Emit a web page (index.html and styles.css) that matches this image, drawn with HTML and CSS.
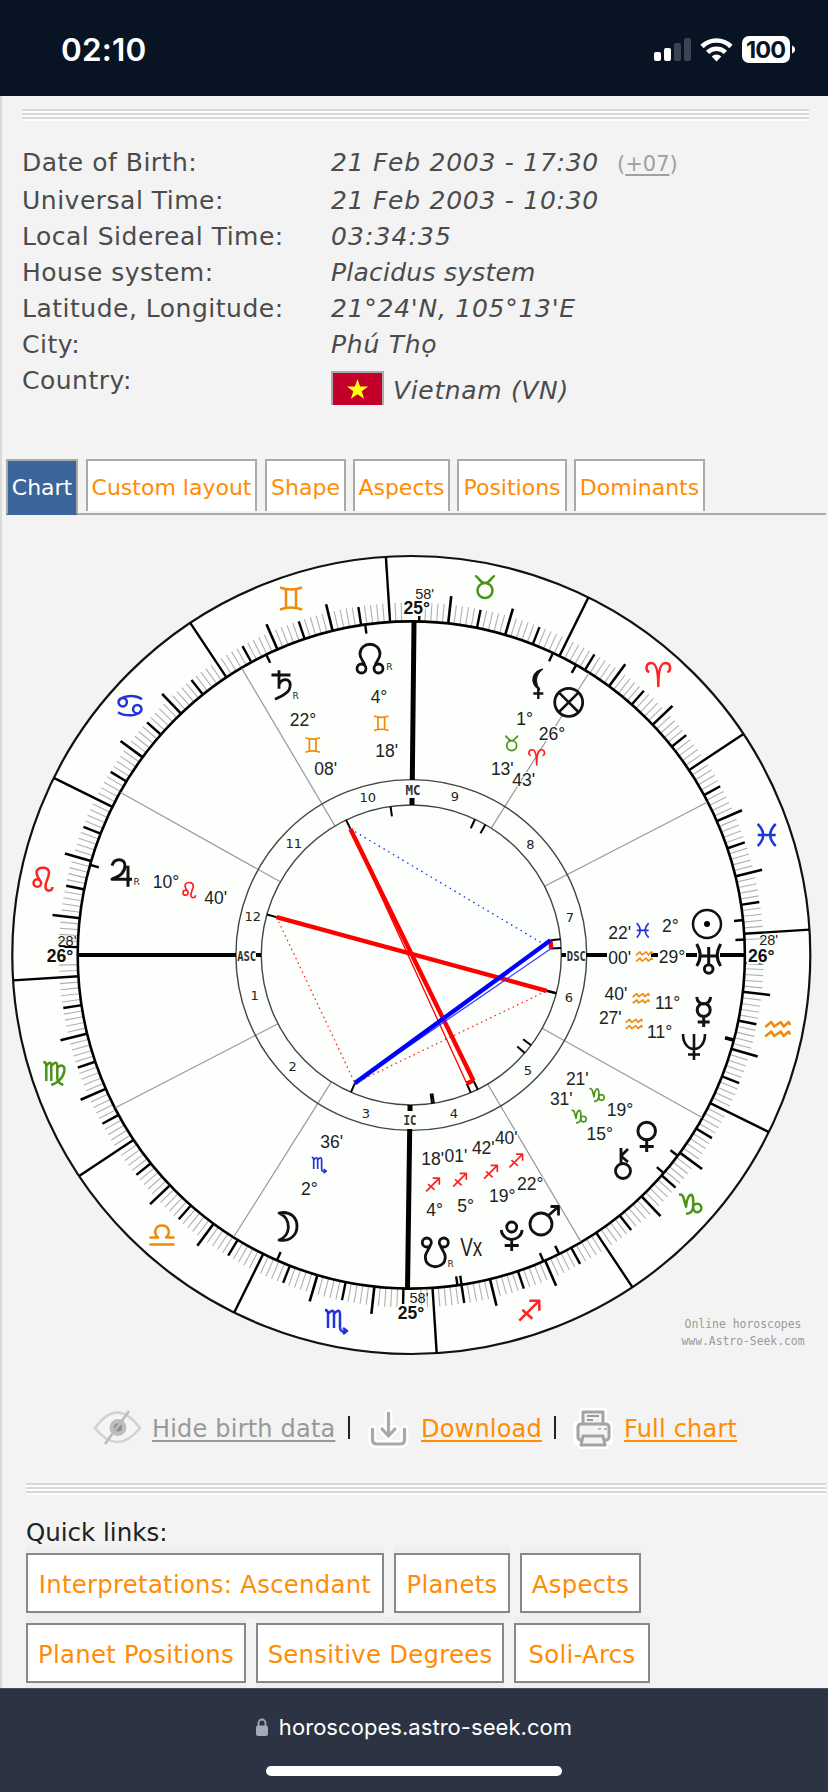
FILE: index.html
```html
<!DOCTYPE html>
<html lang="en">
<head>
<meta charset="utf-8">
<title>Astro-Seek birth chart</title>
<link rel="stylesheet" href="styles.css">
</head>
<body>
<header class="status">
  <span class="clock">02:10</span>
  <svg class="status-icons" width="144" height="30" viewBox="652 35 144 30">
    <g fill="#fff"><rect x="653" y="52" width="7" height="9" rx="2"/><rect x="663" y="48" width="7" height="13" rx="2"/></g>
    <g fill="#3a4352"><rect x="673" y="43" width="7" height="18" rx="2"/><rect x="683" y="38" width="7" height="23" rx="2"/></g>
    <g fill="none" stroke="#fff" stroke-width="4.6"><path d="M701 46.5a20.5 20.5 0 0 1 29 0"/><path d="M706.6 52.3a12.8 12.8 0 0 1 17.8 0"/></g>
    <path fill="#fff" d="M715.5 61.5l-4.8-5a7 7 0 0 1 9.6 0z"/>
    <rect x="741" y="36" width="48" height="27" rx="7" fill="#fff"/>
    <path fill="#fff" d="M791 45.500q3 1.200 3 4t-3 4z"/>
    <text class="battery" x="765" y="58" text-anchor="middle" textLength="40">100</text>
  </svg>
</header>
<main class="page">
  <div class="rule rule-top"></div>
  <dl class="details">
    <div class="row first"><dt>Date of Birth:</dt><dd class="num">21 Feb 2003 - 17:30<span class="zone">(<u>+07</u>)</span></dd></div>
    <div class="row"><dt>Universal Time:</dt><dd class="num">21 Feb 2003 - 10:30</dd></div>
    <div class="row"><dt>Local Sidereal Time:</dt><dd class="num wide">03:34:35</dd></div>
    <div class="row"><dt>House system:</dt><dd>Placidus system</dd></div>
    <div class="row"><dt>Latitude, Longitude:</dt><dd class="num">21°24'N, 105°13'E</dd></div>
    <div class="row"><dt>City:</dt><dd class="num">Phú Thọ</dd></div>
    <div class="row country"><dt>Country:</dt><dd><svg class="flag" width="53" height="34" viewBox="0 0 53 34"><path fill="#aaa" d="M0 0h53v34H0z"/><path fill="#c3002b" d="M2 2h49v32H2z"/><path fill="#ff1" d="M26.500 8l2.600 7.500h8l-6.400 4.700 2.400 7.600-6.600-4.600-6.600 4.600 2.400-7.600-6.400-4.700h8z"/></svg><span>Vietnam (VN)</span></dd></div>
  </dl>
  <nav class="tabs">
    <a class="tab active t1">Chart</a><a class="tab t2">Custom layout</a><a class="tab t3">Shape</a><a class="tab t4">Aspects</a><a class="tab t5">Positions</a><a class="tab t6">Dominants</a>
  </nav>
  <svg class="chart" id="chart" width="828" height="830" viewBox="0 540 828 830"></svg>
  <div class="actions">
    <svg class="eye" width="50" height="40" viewBox="93 1410 50 40"><path d="M95 1430q22-31 45 0q-23 28-45 0z" fill="#f5f5f5" stroke="#d2d2d2" stroke-width="2.500"/><circle cx="118" cy="1429.500" r="8.500" fill="#bdbdbd"/><circle cx="118" cy="1429.500" r="4" fill="#8d8d8d"/><path d="M129 1413l-24 33" stroke="#bbb" stroke-width="2.500"/></svg>
    <a class="hide">Hide birth data</a><i class="bar"></i>
    <svg class="download" width="44" height="46" viewBox="366 1406 44 46" fill="none" stroke-linecap="round" stroke-linejoin="round"><path stroke="#fff" stroke-width="8" d="M388.500 1413v21M382 1429l6.500 7 6.500-7M372.500 1429v11q0 4 4 4h24q4 0 4-4v-11"/><path stroke="#a9a9a9" stroke-width="3.200" d="M388.500 1413v21M382 1429l6.500 7 6.500-7M372.500 1429v11q0 4 4 4h24q4 0 4-4v-11"/></svg>
    <a class="orange dl">Download</a><i class="bar"></i>
    <svg class="printer" width="44" height="46" viewBox="572 1406 44 46"><path fill="none" stroke="#fff" stroke-width="8" stroke-linejoin="round" d="M583 1412h20v13h6v16h-5v4h-22v-4h-5v-16h6z"/><g fill="#f4f4f4" stroke="#a3a3a3" stroke-width="3" stroke-linejoin="round"><path d="M583 1412h20v13h-20z"/><rect x="578" y="1424" width="31" height="16" rx="3"/><path d="M583 1436h20l2 9h-24z"/></g><path stroke="#999" stroke-width="2" d="M587 1416h12M587 1420h6"/><path stroke="#bbb" stroke-width="2" d="M598 1429h3M604 1429h3"/></svg>
    <a class="orange fc">Full chart</a>
  </div>
  <div class="rule rule-bottom"></div>
  <section class="quick">
    <h2>Quick links:</h2>
    <div class="links"><a class="q1">Interpretations: Ascendant</a><a class="q2">Planets</a><a class="q3">Aspects</a></div>
    <div class="links"><a class="q4">Planet Positions</a><a class="q5">Sensitive Degrees</a><a class="q6">Soli-Arcs</a></div>
  </section>
</main>
<footer class="browser">
  <div class="address"><svg width="12" height="18" viewBox="0 0 12 18"><rect y="7.500" width="12" height="10.500" rx="2" fill="#a4a9b8"/><path d="M2.500 8V5a3.500 3.500 0 0 1 7 0v3" fill="none" stroke="#a4a9b8" stroke-width="1.800"/></svg><span>horoscopes.astro-seek.com</span></div>
  <div class="home"></div>
</footer>
<script src="chart.js"></script>
</body>
</html>
```
FILE: styles.css
```css
* { box-sizing: border-box; }
body { margin: 0; width: 828px; height: 1792px; overflow: hidden; background: #f3f3f3; font-family: "DejaVu Sans", Verdana, sans-serif; display: flex; flex-direction: column; }
.status { height: 96px; flex: none; background: #081324; display: flex; align-items: center; justify-content: space-between; padding: 4px 31px 0 61px; }
.clock { color: #fff; font: 600 31.500px/32px Inter, sans-serif; letter-spacing: .2px; }
.status-icons { display: block; }
.battery { font: 700 23.500px Inter, sans-serif; fill: #081324; }
.page { height: 1592px; flex: none; overflow: hidden; background: #f3f3f3; box-shadow: inset 2px 0 #d9d9d9; padding-top: 13px; }
.rule { height: 12px; background: repeating-linear-gradient(#d8d8d8 0 2px, #fcfcfc 2px 4px); }
.rule-top { margin: 0 19px 0 22px; }
.rule-bottom { margin: 33px 2px 0 26px; }
.details { margin: 24px 0 0 22px; font-size: 25px; line-height: 36px; color: #4b4b4b; letter-spacing: .24px; }
.row { display: grid; grid-template-columns: 309px 1fr; height: 36px; white-space: nowrap; }
.row.first { height: 38px; }
.row.country { height: 48px; }
dt, dd { margin: 0; }
dt { letter-spacing: .5px; }
dd { font-style: italic; }
.num { letter-spacing: .74px; }
.num.wide { letter-spacing: 1.1px; }
.zone { font-style: normal; font-size: 21px; color: #a0a0a0; margin-left: 18px; letter-spacing: 0; }
.zone u, .actions a { text-decoration-thickness: 2px; text-underline-offset: 3px; }
.country dd { display: flex; gap: 9px; padding-top: 8px; letter-spacing: .65px; }
.country dd span { padding-top: 2px; }
.flag { display: block; }
.tabs { margin: 48px 2px 0 6px; height: 56px; display: flex; align-items: flex-start; box-shadow: inset 0 -2px #aaa; }
.tab { height: 52px; border: 2px solid #aaa; border-bottom: 0; background: #fff; color: #ff8c05; font-size: 22px; line-height: 53px; text-align: center; white-space: nowrap; margin-right: 8px; }
.tab.active { height: 56px; background: #3a6699; color: #fff; border-bottom: 2px solid #3a6699; }
.t1 { width: 72px; } .t2 { width: 171px; } .t3 { width: 81px; margin-right: 7px; } .t4 { width: 97px; margin-right: 7px; } .t5 { width: 110px; margin-right: 7px; } .t6 { width: 131px; }
.chart { display: block; margin-top: 25px; }
.actions { margin: 34px 0 0 93px; height: 46px; display: flex; align-items: center; font-size: 24px; letter-spacing: .2px; line-height: 46px; white-space: nowrap; }
.actions a { text-decoration-line: underline; padding-top: 3px; }
.actions svg { flex: none; }
.actions .eye { margin-top: 2px; }
.actions .download, .actions .printer { margin-top: 3px; }
.hide { color: #999; margin-left: 9px; width: 183px; }
.bar { width: 2px; height: 23px; background: #222; margin-left: 13px; }
.download { margin-left: 16px; }
.orange { color: #ff8c05; }
.dl { margin-left: 11px; width: 120px; }
.printer { margin-left: 16px; }
.fc { margin-left: 8px; }
.quick { margin-left: 26px; }
.quick h2 { margin: 24px 0 0; font: 400 24.500px/28px "DejaVu Sans", Verdana, sans-serif; color: #222; }
.links { height: 70px; padding-top: 6px; display: flex; gap: 10px; }
.quick h2 + .links { margin-top: 0; }
.links a { height: 60px; border: 2px solid #888; background: #fff; box-shadow: 0 -6px #eee, 0 5px #eee; color: #ff8c05; font-size: 24.300px; letter-spacing: .3px; line-height: 60px; text-align: center; white-space: nowrap; }
.q1 { width: 358px; } .q2 { width: 116px; } .q3 { width: 121px; } .q4 { width: 220px; } .q5 { width: 248px; } .q6 { width: 136px; }
.browser { height: 104px; flex: none; background: #2c3443; border-top: 1px solid #4a505c; display: flex; flex-direction: column; align-items: center; }
.address { margin-top: 22px; height: 32px; display: flex; align-items: center; gap: 11px; color: #fff; font: 400 22px/32px Inter, sans-serif; letter-spacing: .05px; }
.home { margin-top: 23px; width: 296px; height: 10px; border-radius: 5px; background: #fff; }
.lbl { font: 17.500px "Liberation Sans", Arial, sans-serif; fill: #222; text-anchor: middle; paint-order: stroke; stroke: #fdfffc; stroke-width: 2px; }
.edge { font: 14.500px "Liberation Sans", Arial, sans-serif; fill: #222; text-anchor: middle; }
.edge-b { font: bold 17.500px "Liberation Sans", Arial, sans-serif; fill: #111; text-anchor: middle; paint-order: stroke; stroke: #fdfffc; stroke-width: 4px; }
.house { font: 13px "DejaVu Sans", sans-serif; fill: #222; text-anchor: middle; }
.axis { font: bold 13.500px "DejaVu Sans Mono", monospace; fill: #333; text-anchor: middle; }
.retro { font: 9px "DejaVu Sans", sans-serif; fill: #222; text-anchor: middle; }
.mark { font: 12.500px "DejaVu Sans Mono", monospace; fill: #999; text-anchor: middle; }
.vertex { font: 25px "Liberation Sans", Arial, sans-serif; fill: #222; text-anchor: middle; }
.glyph { fill: none; stroke-linecap: butt; stroke-linejoin: round; }
```
FILE: chart.js
```js
const CX = 411.3, CY = 955, ASC = 146.35;
const out = [];
const at = (r, lon) => {
  const t = (180 + lon - ASC) * Math.PI / 180;
  return [(CX + r * Math.cos(t)).toFixed(2), (CY - r * Math.sin(t)).toFixed(2)];
};
const line = (a, b, color, w, extra = '') =>
  out.push(`<line x1="${a[0]}" y1="${a[1]}" x2="${b[0]}" y2="${b[1]}" stroke="${color}" stroke-width="${w}" ${extra}/>`);
const ring = (r, w, color, fill = 'none') =>
  out.push(`<circle cx="${CX}" cy="${CY}" r="${r}" fill="${fill}" stroke="${color}" stroke-width="${w}"/>`);
const text = (cls, s, x, y, extra = '') => out.push(`<text class="${cls}" x="${x}" y="${y}" ${extra}>${s}</text>`);

// wheel and degree scale
ring(399, 2.2, '#111', '#fdfffc');
for (let d = 0; d < 360; d++) {
  if (d % 30 === 0) line(at(333, d), at(399, d), '#000', 2.4);
  else if (d % 10 === 0) line(at(333, d), at(361, d), '#000', 2.6);
  else if (d % 5 === 0) line(at(333, d), at(352, d), '#000', 2.4);
  else if (![56, 57, 236, 237, 146, 147, 326, 327, 328].includes(d)) line(at(334, d), at(352.5, d), '#b0b0b0', 1.1);
}
ring(333.6, 2.6, '#000');

// house cusps
[150.8, 120.6, 57.8, 27.3].forEach(t => {
  [t, t + 180].forEach(v => line(at(150, v - 180 + ASC), at(333, v - 180 + ASC), '#999', 1.2));
});
ring(175.4, 1.4, '#444');
ring(150, 1.4, '#444');

// angles
[[77, 955, 236, 955], [256, 955, 261, 955], [561.5, 955, 566, 955], [586, 955, 607, 955], [651, 955, 658, 955], [686, 955, 697, 955], [720, 955, 745, 955]]
  .forEach(l => line(l.slice(0, 2), l.slice(2), '#000', 4));
[[414, 622, 412.3, 780], [412, 798, 412, 805], [410, 1105, 410, 1111], [409.7, 1129, 407.5, 1290]]
  .forEach(l => line(l.slice(0, 2), l.slice(2), '#000', 5));

// planet ticks on both rings
[130.67, 82.13, 64.3, 31.22, 26.72, 332.37, 329, 311.67, 311.45, 289.35, 285.52, 262.67, 259.7, 245.02, 244.3, 212.6].forEach(l => {
  line(at(324.5, l), at(334, l), '#000', 2.4);
  line(at(140, l), at(150, l), '#000', 2);
});

// aspects
const asp = (a, b, c, w, e) => line(at(140, a), at(140, b), c, w, e);
asp(82.13, 329, '#22f', 1.3, 'stroke-dasharray="1.5 4"');
asp(130.67, 212.6, '#f22', 1.3, 'stroke-dasharray="1.5 3.500"');
asp(212.6, 311.5, '#f22', 1.3, 'stroke-dasharray="1.5 3.500"');
asp(82.13, 259.7, '#f00', 1.3);
asp(82.13, 262.67, '#f00', 4.4);
asp(259.7, 262.67, '#f00', 4.4);
asp(332.37, 329, '#f00', 4.4);
asp(130.67, 311.55, '#f00', 4.4);
asp(212.6, 329, '#33f', 1.2);
asp(212.6, 332.37, '#00f', 4.4);

// glyph outlines drawn around (0,0)
const G = {
  ari: 'M-9-2C-13-3-13-11-7-11C-2-11 0-3 0 12C0-3 2-11 7-11C13-11 13-3 9-2',
  tau: 'M-10-11C-6-11-6-4 0-4S6-11 10-11M-7.500 3.500a7.500 7.500 0 1 0 15 0a7.500 7.500 0 1 0-15 0',
  gem: 'M-11-11Q0-7 11-11M-11 11Q0 7 11 11M-5-9V9M5-9V9',
  can: 'M-11.500-3.500a4.200 4.200 0 1 0 8.400 0a4.200 4.200 0 1 0-8.400 0M-11.500-4C-9-11 5-11 12-6.500M3.100 3.500a4.200 4.200 0 1 0 8.400 0a4.200 4.200 0 1 0-8.400 0M11.500 4C9 11-5 11-12 6.500',
  leo: 'M-9.500 4a3.800 3.800 0 1 0 7.600 0a3.800 3.800 0 1 0-7.600 0M-3 2C-4-1-8-5-6-8.500C-3-13 6-12 6-6C6-1 2 3 2.500 8C3 13 9 13 9.500 8',
  vir: 'M-11-11Q-8-11-8-7V8M-8-7Q-3-14-3-6V8M-3-7Q3-14 3-6V5Q3 10 9 12M3-5C6-9 11-8 10-2C9 5 3 10-3 12',
  lib: 'M-12.500 9.500H12.500M-12.500 2.500H-4C-9-2-7-9.500 0-9.500S9-2 4 2.500H12.500',
  sco: 'M-11-11Q-8-11-8-7V7M-8-7Q-2-14-2-6V7M-2-7Q4-14 4-6V6Q4 12 10 10M7 7L11 10L7 13',
  sag: 'M-10 10L10-10M0-10H10V0M-7-1L3 8',
  cap: 'M-11-9Q-7-10-6-4L-4 3Q-3-8 1-9Q4-9 3 4Q2 10-4 10M3 3a4.300 4.300 0 1 1 2 5Q3 6 3 2',
  aqu: 'M-12.500-2L-6.500-7L-3.500-2.500L3-7L6-2.500L11-7L12.500-4M-12.500 7.500L-6.500 2.500L-3.500 7L3 2.500L6 7L11 2.500L12.500 5.500',
  pis: 'M-9-11Q2 0-9 11M9-11Q-2 0 9 11M-9 0H9',
  sat: 'M-10.500-9.700H8.500M-3-14.500V4M-3 0Q-1-5 4-5Q9-4 8 2Q7 7 3 9Q1 11-7 14.500',
  node: 'M-8.500 14a4.500 4.500 0 1 1 0-9a4.500 4.500 0 1 1 0 9M8.500 14a4.500 4.500 0 1 1 0-9a4.500 4.500 0 1 1 0 9M-5 7C-6 2-10 0-10-5C-10-18 10-18 10-5C10 0 6 2 5 7',
  jup: 'M-10-7C-8-15 3-15 3-7C3 0-3 4-10 6.500H10M6-7V14',
  lil: 'M0 3V15M-5 9.500H5',
  merc: 'M-7-15Q-6-8 0-8Q6-8 7-15M-6.500-2a6.500 6.500 0 1 0 13 0a6.500 6.500 0 1 0-13 0M0 5V15M-6 10H6',
  nep: 'M-11-13C-11 7 11 7 11-13M0-13V13M-6 7.500H6',
  ven: 'M-8.800-6a8.800 8.800 0 1 0 17.600 0a8.800 8.800 0 1 0-17.600 0M0 3V15M-7 9.500H7',
  chi: 'M-7.500 8a7.500 7.500 0 1 0 15 0a7.500 7.500 0 1 0-15 0M-2 0V-15M5-14L-2-7L5-1',
  mar: 'M-15.500 4.500a11 11 0 1 0 22 0a11 11 0 1 0-22 0M3-4L13-13M5-13H13V-4',
  plu: 'M-5-9a5 5 0 1 0 10 0a5 5 0 1 0-10 0M-10.500-6C-9 6.500 9 6.500 10.500-6M0 3V15M-7 9.500H7',
  ura: 'M-12-12Q-5 0-12 10M12-12Q5 0 12 10M-10 0H10M0-9V9M-4.300 13a4.300 4.300 0 1 0 8.600 0a4.300 4.300 0 1 0-8.600 0'
};
const O = '#f08a0a', R = '#f22', B = '#2233dd', E = '#4a9318', K = '#111';
const glyph = (k, x, y, c, s = 1, w = 2.5) =>
  out.push(`<path class="glyph" d="${G[k]}" transform="translate(${x} ${y}) scale(${s})" stroke="${c}" stroke-width="${w / s}"/>`);

[['gem', 291, 598.5, O], ['can', 130, 705.7, B], ['leo', 43, 879, R], ['vir', 54.3, 1073, E], ['lib', 162, 1235, O],
 ['sco', 336, 1321, B], ['sag', 529.3, 1310.7, R], ['cap', 690, 1203.7, E], ['aqu', 777.7, 1029, O], ['pis', 766.7, 835, B],
 ['ari', 658.3, 674, R], ['tau', 485, 587, E]].forEach(g => glyph(...g));
[['gem', 312.7, 745, O], ['gem', 381.3, 723.3, O], ['leo', 189.3, 890, R], ['tau', 511.7, 743.3, E], ['ari', 536.7, 757, R],
 ['pis', 642.7, 930.3, B], ['aqu', 644.3, 956.5, O], ['aqu', 641, 998.3, O], ['aqu', 634, 1024, O], ['cap', 596.7, 1094.7, E],
 ['cap', 578.7, 1116.3, E], ['sag', 432.7, 1184.7, R], ['sag', 459.7, 1180, R], ['sag', 490.7, 1172, R], ['sag', 516, 1160.7, R],
 ['sco', 319, 1164.5, B]].forEach(g => glyph(...g, .66, 1.7));

// planets
glyph('sat', 282, 684.7, K, 1, 2.8);
glyph('node', 370, 659, K, 1, 2.8);
out.push('<g transform="rotate(180 435.300 1252)">'); glyph('node', 435.3, 1252, K, 1, 2.8); out.push('</g>');
glyph('jup', 122, 872.7, K, 1, 3);
out.push('<path d="M543 669C530 671 530 686 540 690C535 683 535 675 543 669z" fill="#111" stroke="#111"/>');
glyph('lil', 538.3, 684, K, 1, 2.4);
out.push('<circle cx="568.700" cy="702.300" r="14" fill="#fdfffc" stroke="#111" stroke-width="2.800"/><path d="M559 692.600l19.400 19.400M578.400 692.600l-19.400 19.400" stroke="#111" stroke-width="2.600"/>');
out.push('<circle cx="707" cy="924" r="14" fill="none" stroke="#111" stroke-width="2.500"/><circle cx="707" cy="924" r="3"/>');
glyph('ura', 708.7, 956, K, 1, 3);
glyph('merc', 703.7, 1012, K, 1, 3);
glyph('nep', 694, 1047, K, 1, 2.6);
glyph('ven', 646.7, 1137, K, 1, 3);
glyph('chi', 623, 1163, K, 1, 2.8);
glyph('mar', 545.5, 1219.5, K, 1, 2.8);
glyph('plu', 511.7, 1236, K, 1, 2.8);
out.push('<path d="M279 1213C303 1208 303 1244 279 1240C291 1236 292 1219 279 1213z" fill="none" stroke="#111" stroke-width="2.800" stroke-linejoin="round"/>');

// degree and minute captions
[['22°', 303, 726], ["08'", 325.7, 774.7], ['4°', 379, 703], ["18'", 386.7, 756.7], ['10°', 166, 888.3], ["40'", 215.7, 904],
 ['1°', 524.7, 724.7], ['26°', 552, 739.7], ["13'", 502.3, 774.7], ["43'", 523.7, 786.3], ["22'", 619.7, 939], ['2°', 670.3, 932],
 ["00'", 619.7, 964], ['29°', 672, 962.7], ["40'", 616, 1000], ['11°', 667.7, 1008.7], ["27'", 610.3, 1024], ['11°', 659.7, 1038.3],
 ["21'", 577.3, 1085.3], ["31'", 561.3, 1104.7], ['19°', 620, 1115.7], ['15°', 599.7, 1140], ["18'", 432.7, 1165.3], ["01'", 456, 1162],
 ["42'", 483.3, 1154], ["40'", 506.3, 1144], ['4°', 434.7, 1215.7], ['5°', 465.7, 1211.7], ['19°', 502.3, 1201.7], ['22°', 530.3, 1190.3],
 ["36'", 331.7, 1148.3], ['2°', 309.3, 1195]].forEach(t => text('lbl', ...t));
[[295.7, 699], [389.3, 670], [136.7, 884.7], [450.7, 1266.7]].forEach(p => text('retro', 'R', ...p));
text('vertex', 'Vx', 471.3, 1255.7, 'textLength="22" lengthAdjust="spacingAndGlyphs"');
[['25°', 416.7, 614], ['26°', 60, 961.7], ['26°', 761.3, 961.5], ['25°', 411, 1318.7]].forEach(t => text('edge-b', ...t));
[["58'", 424.7, 598.7], ["28'", 67, 945.7], ["28'", 768.7, 944.7], ["58'", 419, 1303.3]].forEach(t => text('edge', ...t));
const squeeze = w => `textLength="${w}" lengthAdjust="spacingAndGlyphs"`;
[['MC', 413, 795, squeeze(15)], ['ASC', 246.7, 961, squeeze(19)], ['DSC', 576.3, 961, squeeze(19)], ['IC', 410, 1125, squeeze(13)]].forEach(t => text('axis', ...t));
[[10, 367.7, 801.7], [9, 455, 800.7], [8, 530.3, 849], [7, 570, 921.7], [6, 569, 1002], [5, 528, 1075], [4, 454, 1118.3],
 [3, 366, 1118], [2, 292.7, 1070.7], [1, 254.7, 1000], [12, 252.7, 921], [11, 293.7, 848]].forEach(t => text('house', ...t));
text('mark', 'Online horoscopes', 743, 1328, squeeze(117));
text('mark', 'www.Astro-Seek.com', 743, 1345, squeeze(123));
document.getElementById('chart').innerHTML = out.join('');
```
